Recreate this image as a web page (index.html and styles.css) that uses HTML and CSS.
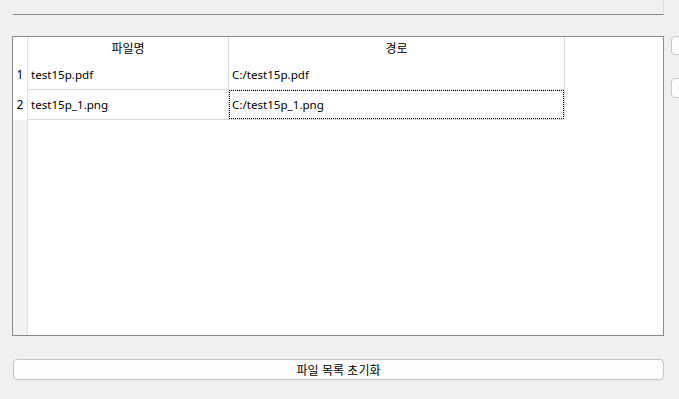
FILE: index.html
```html
<!DOCTYPE html>
<html lang="ko">
<head>
  <meta charset="UTF-8">
  <title>파일 목록</title>
  <link rel="stylesheet" href="styles.css">
</head>
<body>

  <div class="top-group"></div>

  <div class="main">
    <div class="table-frame">
      <div class="row-strip"></div>
      <table class="file-table">
        <thead>
          <tr>
            <th class="corner"></th>
            <th class="col-name">파일명</th>
            <th class="col-path">경로</th>
          </tr>
        </thead>
        <tbody>
          <tr>
            <td class="row-num">1</td>
            <td>test15p.pdf</td>
            <td>C:/test15p.pdf</td>
          </tr>
          <tr>
            <td class="row-num">2</td>
            <td>test15p_1.png</td>
            <td class="focused"><div class="focus-box">C:/test15p_1.png</div></td>
          </tr>
        </tbody>
      </table>
    </div>

    <div class="side">
      <button class="side-btn"></button>
      <button class="side-btn second"></button>
    </div>
  </div>

  <button class="reset-btn">파일 목록 초기화</button>

</body>
</html>
```

FILE: styles.css
```css
body {
  margin: 0;
  width: 679px;
  height: 399px;
  overflow: hidden;
  background-color: #f0f0f0;
  font-family: "Noto Sans", "Noto Sans CJK KR", sans-serif;
  font-size: 12px;
  color: #000;
}

.top-group {
  margin-left: 13px;
  width: 650px;
  height: 14px;
  border-bottom: 1px solid #8c8c8c;
  border-right: 1px solid #dcdcdc;
}

.main {
  display: flex;
  margin-top: 21px;
  padding-left: 12px;
}

.table-frame {
  position: relative;
  width: 650px;
  height: 298px;
  border: 1px solid #8a8a8a;
  background-color: #fff;
  flex-shrink: 0;
}

/* grauer Streifen unter den Zeilennummern */
.row-strip {
  position: absolute;
  left: 0;
  top: 0;
  bottom: 0;
  width: 14px;
  background-color: #f3f3f3;
  border-right: 1px solid #e2e2e2;
}

.file-table {
  position: relative;
  border-collapse: collapse;
  table-layout: fixed;
}

.file-table th,
.file-table td {
  padding: 0;
  font-weight: normal;
  white-space: nowrap;
  overflow: hidden;
  background-color: #fff;
}

.file-table th {
  height: 23px;
  text-align: center;
  line-height: 20px;
  border-right: 1px solid #dadada;
}

.file-table th.corner {
  width: 14px;
  border-right: 1px solid #e2e2e2;
}

.file-table th.col-name {
  width: 200px;
}

.file-table th.col-path {
  width: 335px;
}

.file-table td {
  height: 29px;
  padding-left: 3px;
  font-size: 11.6px;
  border-right: 1px solid #dadada;
  border-bottom: 1px solid #dadada;
}

.file-table td.row-num {
  padding-left: 0;
  font-size: 12px;
  text-align: center;
  border-bottom: none;
  border-right: 1px solid #e2e2e2;
}

.file-table td.focused {
  padding: 0;
}

.focus-box {
  height: 27px;
  line-height: 27px;
  padding-left: 2px;
  border: 1px dotted #000;
}

/* rechte Knöpfe, vom Fensterrand abgeschnitten */
.side {
  display: flex;
  flex-direction: column;
  width: 9px;
  margin-left: 7px;
  overflow: hidden;
}

.side-btn {
  flex-shrink: 0;
  width: 80px;
  height: 19px;
  padding: 0;
  background-color: #fdfdfd;
  border: 1px solid #c6c6c6;
  border-radius: 4px;
}

.side-btn.second {
  height: 20px;
  margin-top: 23px;
}

.reset-btn {
  display: block;
  margin: 23px 0 0 13px;
  width: 651px;
  height: 21px;
  padding: 0;
  background-color: #fdfdfd;
  border: 1px solid #c4c4c4;
  border-radius: 4px;
  font-family: "Noto Sans CJK KR", sans-serif;
  font-size: 12px;
  color: #000;
  line-height: 18px;
}
```
